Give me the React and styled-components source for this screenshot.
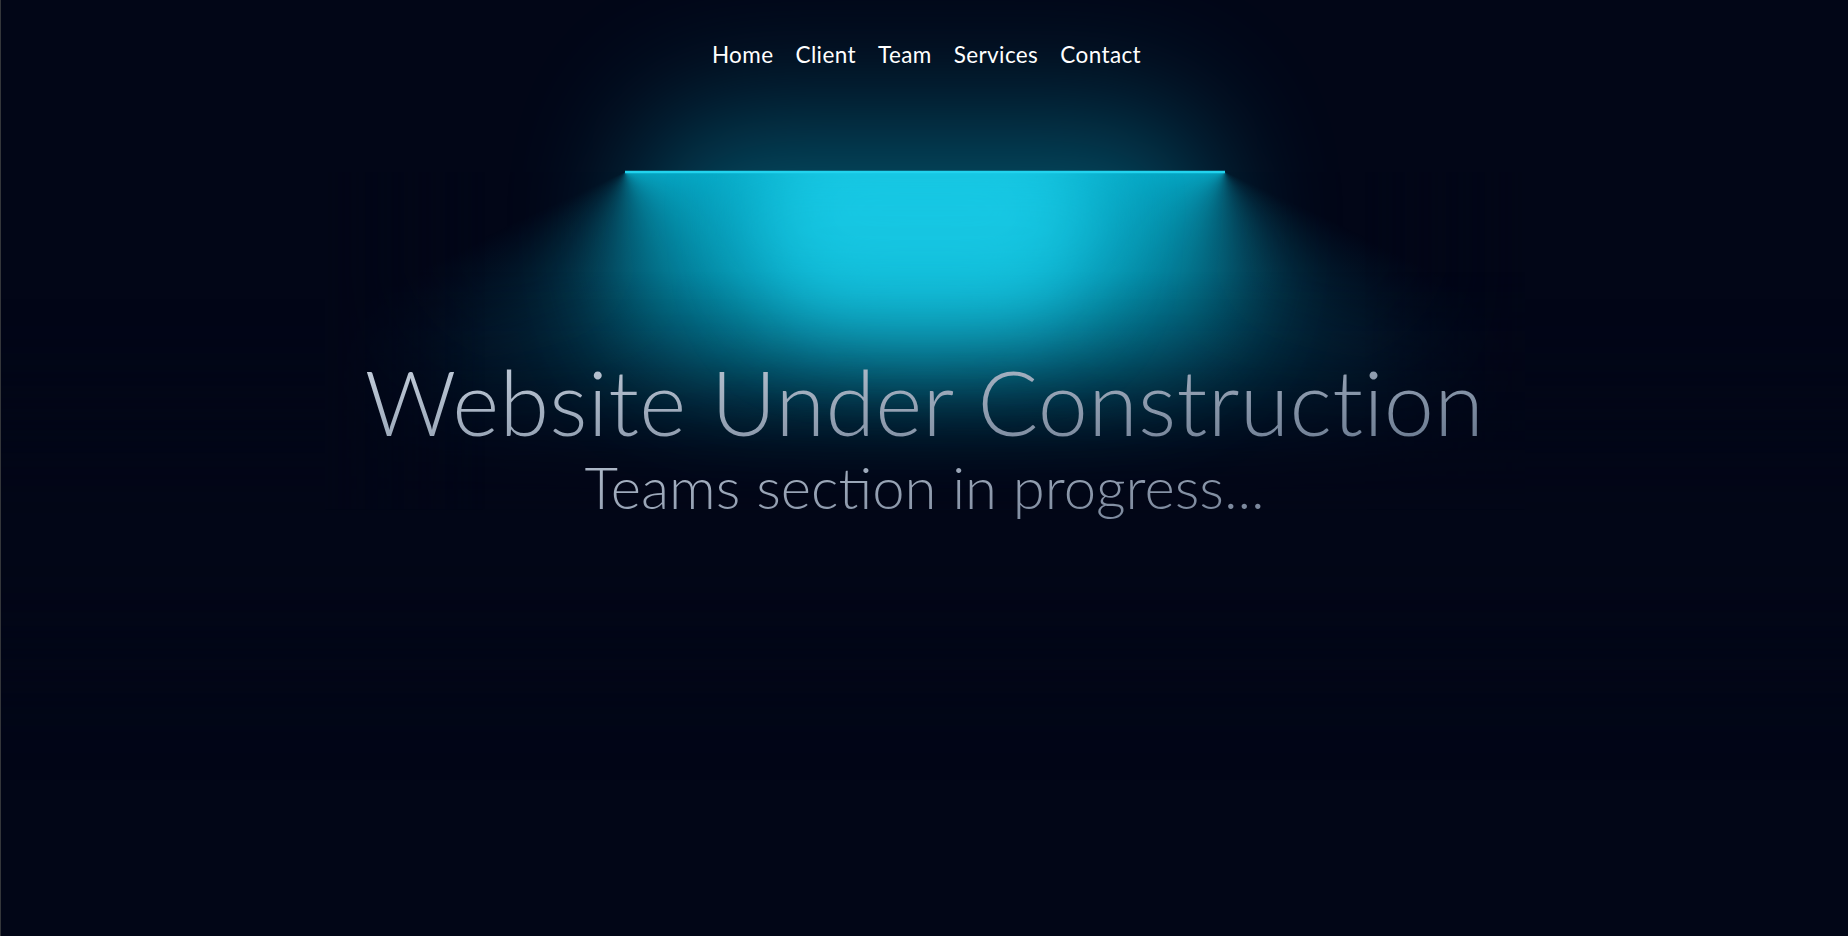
import styled, { createGlobalStyle } from "styled-components";

const GlobalStyle = createGlobalStyle`
  html, body {
    margin: 0;
    padding: 0;
    background: #020617;
  }
  * {
    box-sizing: border-box;
  }
`;

const navItems = ["Home", "Client", "Team", "Services", "Contact"];

const App = () => {
  return (
    <Page>
      <GlobalStyle />
      <Lamp aria-hidden="true">
        <ConeLeft>
          <FadeBottom />
          <FadeSide $side="left" />
        </ConeLeft>
        <ConeRight>
          <FadeSide $side="right" />
          <FadeBottom />
        </ConeRight>
        <DarkBand />
        <Glow />
        <InnerGlow />
        <Beam />
        <Cover />
      </Lamp>

      <Nav>
        {navItems.map((item) => (
          <NavLink href="#" key={item}>
            {item}
          </NavLink>
        ))}
      </Nav>

      <Content>
        <Title>Website Under Construction</Title>
        <Subtitle>Teams section in progress...</Subtitle>
      </Content>
    </Page>
  );
};

const Page = styled.div`
  position: relative;
  display: flex;
  flex-direction: column;
  align-items: center;
  width: 100%;
  height: 100vh;
  overflow: hidden;
  background: #020617;
  border-left: 1px solid #34363a;
  isolation: isolate;
`;

// lamp layer, scaled vertically around its middle (y = 312)
const Lamp = styled.div`
  position: absolute;
  top: 0;
  left: 0;
  right: 0;
  height: 624px;
  transform: scaleY(1.25);
  z-index: 0;
  isolation: isolate;
  pointer-events: none;
`;

const ConeLeft = styled.div`
  position: absolute;
  top: 200px;
  left: calc(50% - 600px);
  width: 600px;
  height: 270px;
  background-image: conic-gradient(
    from 70deg at center top,
    #06b6d4,
    transparent,
    transparent
  );
`;

const ConeRight = styled.div`
  position: absolute;
  top: 200px;
  left: 50%;
  width: 600px;
  height: 270px;
  background-image: conic-gradient(
    from 290deg at center top,
    transparent,
    transparent,
    #06b6d4
  );
`;

const FadeBottom = styled.div`
  position: absolute;
  left: 0;
  bottom: 0;
  width: 100%;
  height: 190px;
  background: #020617;
  z-index: 20;
  mask-image: linear-gradient(to top, white, transparent);
`;

const FadeSide = styled.div`
  position: absolute;
  bottom: 0;
  ${({ $side }) => ($side === "left" ? "left: 0;" : "right: 0;")}
  width: 160px;
  height: 100%;
  background: #020617;
  z-index: 20;
  mask-image: linear-gradient(
    ${({ $side }) => ($side === "left" ? "to right" : "to left")},
    white,
    transparent
  );
`;

const DarkBand = styled.div`
  position: absolute;
  top: 350px;
  left: 0;
  width: 100%;
  height: 192px;
  background: #020617;
  transform: translateY(48px) scaleX(1.5);
  filter: blur(40px);
`;

const Glow = styled.div`
  position: absolute;
  top: 172px;
  left: calc(50% - 290px);
  width: 580px;
  height: 150px;
  border-radius: 9999px;
  background: #06b6d4;
  opacity: 0.5;
  filter: blur(64px);
  z-index: 50;
`;

const InnerGlow = styled.div`
  position: absolute;
  top: 150px;
  left: calc(50% - 170px);
  width: 340px;
  height: 160px;
  border-radius: 9999px;
  background: #22d3ee;
  filter: blur(40px);
  z-index: 30;
`;

const Beam = styled.div`
  position: absolute;
  top: 199px;
  left: calc(50% - 300px);
  width: 600px;
  height: 2px;
  background: #22d3ee;
  z-index: 50;
`;

const Cover = styled.div`
  position: absolute;
  top: 24px;
  left: 0;
  width: 100%;
  height: 176px;
  background: #020617;
  z-index: 40;
`;

const Nav = styled.nav`
  position: relative;
  z-index: 60;
  display: flex;
  gap: 22px;
  padding-top: 40px;
  margin-left: 4px;
`;

const NavLink = styled.a`
  color: #ffffff;
  font-family: "Lato", "Open Sans", sans-serif;
  font-size: 22.5px;
  font-weight: 400;
  line-height: 30px;
  letter-spacing: 0.4px;
  text-decoration: none;
`;

const Content = styled.div`
  position: relative;
  z-index: 60;
  display: flex;
  flex-direction: column;
  align-items: center;
  margin-top: 281px;
`;

const Title = styled.h1`
  margin: 0;
  font-family: "Lato", "Open Sans", sans-serif;
  font-size: 90px;
  font-weight: 300;
  line-height: 100px;
  letter-spacing: 0.3px;
  background: linear-gradient(to bottom right, #cbd5e1, #64748b);
  -webkit-background-clip: text;
  background-clip: text;
  color: transparent;
`;

const Subtitle = styled.p`
  margin: 0;
  font-family: "Lato", "Open Sans", sans-serif;
  font-size: 58px;
  font-weight: 300;
  line-height: 72px;
  background: linear-gradient(to bottom right, #b4bfce, #748196);
  -webkit-background-clip: text;
  background-clip: text;
  color: transparent;
`;

export default App;
